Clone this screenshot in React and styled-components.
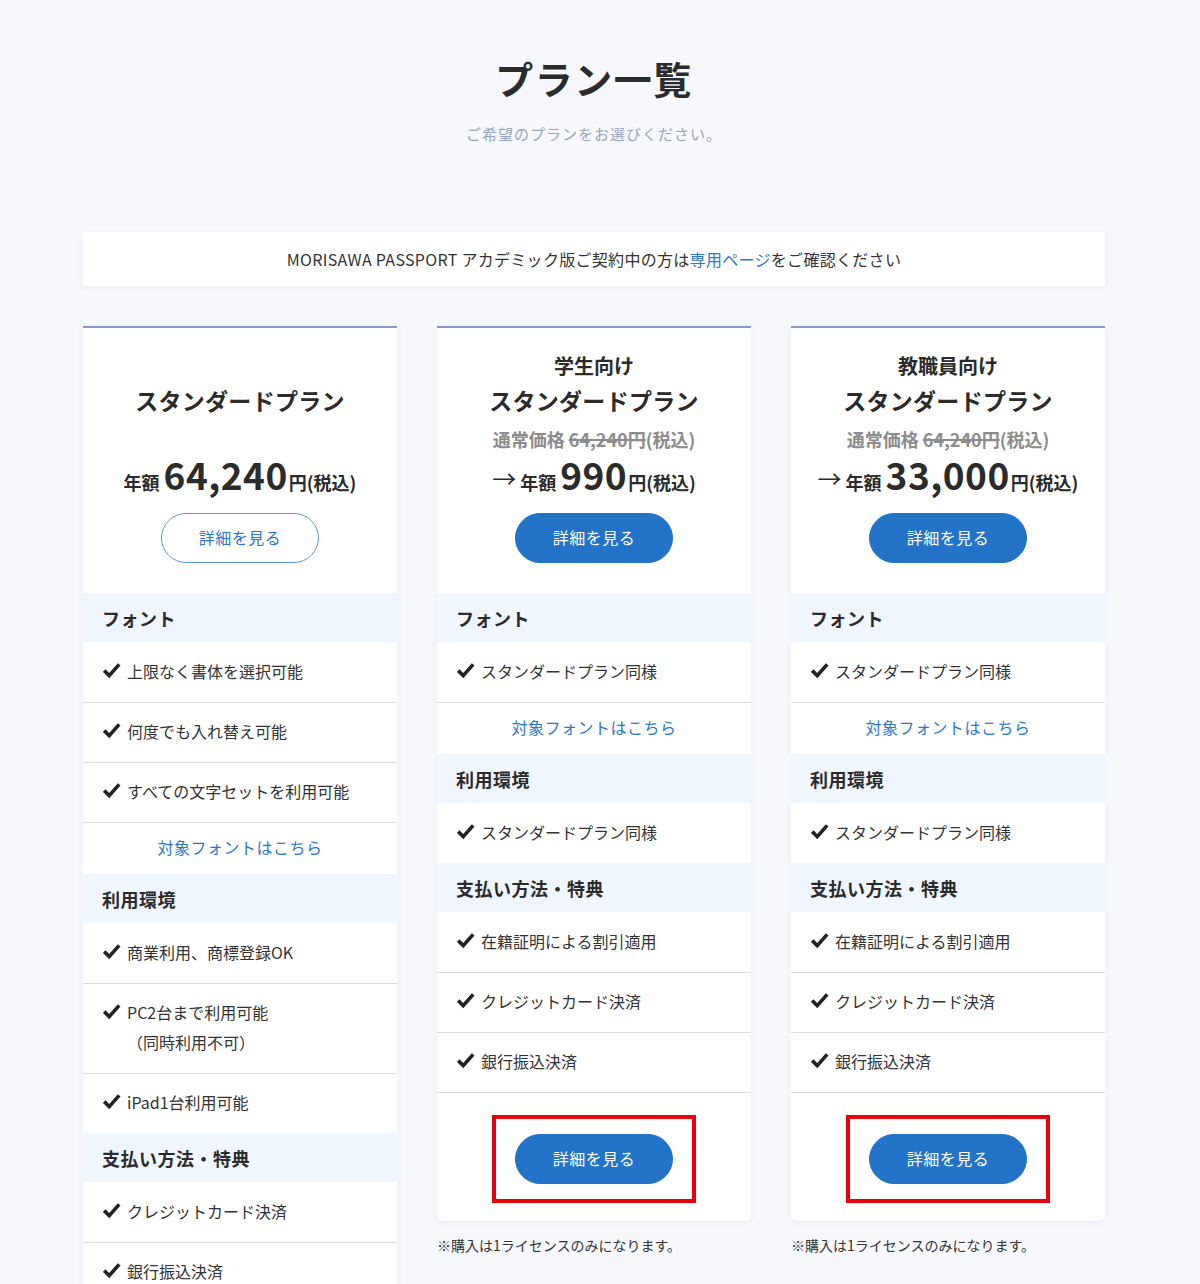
import React from "react";
import styled, { createGlobalStyle } from "styled-components";

const Global = createGlobalStyle`
  html, body { margin: 0; padding: 0; }
  body {
    background: #f7f8fc;
    font-family: "Noto Sans CJK JP", "Noto Sans", sans-serif;
    color: #333;
  }
  * { box-sizing: border-box; }
`;

const Page = styled.div`
  width: 1022px;
  margin-left: 83px;
  padding-top: 51px;
  padding-bottom: 60px;
`;

const Heading = styled.header`
  display: flex;
  flex-direction: column;
  align-items: center;
`;

const Title = styled.h1`
  margin: 0;
  font-size: 38px;
  line-height: 54px;
  font-weight: 700;
  color: #2b2b2b;
  letter-spacing: 1.5px;
`;

const Lead = styled.p`
  margin: 17px 0 0;
  font-size: 15px;
  line-height: 24px;
  color: #97a5bf;
  letter-spacing: 1px;
`;

const Notice = styled.div`
  margin-top: 86px;
  height: 54px;
  background: #fff;
  box-shadow: 0 2px 6px rgba(30, 50, 90, 0.06);
  display: flex;
  align-items: center;
  justify-content: center;
  font-size: 16px;
  letter-spacing: 0.3px;
  color: #333;
`;

const Link = styled.a`
  color: #2f77cc;
  text-decoration: none;
`;

const Cards = styled.div`
  margin-top: 40px;
  display: grid;
  grid-template-columns: repeat(3, 314px);
  column-gap: 40px;
  align-items: start;
`;

const Column = styled.div`
  display: flex;
  flex-direction: column;
`;

const Card = styled.section`
  background: #fff;
  border-top: 2px solid #8299c9;
  border-radius: 0 0 6px 6px;
  box-shadow: 0 2px 8px rgba(30, 50, 90, 0.05);
  overflow: hidden;
`;

const Top = styled.div`
  padding: 21px 0 30px;
  display: flex;
  flex-direction: column;
  align-items: center;
`;

const Target = styled.div`
  font-size: 20px;
  line-height: 34px;
  font-weight: 700;
  color: #2b2b2b;
  min-height: 34px;
`;

const PlanName = styled.h2`
  margin: 0;
  font-size: 23px;
  line-height: 34px;
  font-weight: 700;
  color: #2b2b2b;
  letter-spacing: 0.3px;
`;

const Regular = styled.div`
  font-size: 18px;
  line-height: 40px;
  height: 42px;
  padding-top: 2px;
  font-weight: 700;
  color: #8c8c8c;
  s { text-decoration-thickness: 1.5px; }
`;

const Price = styled.div`
  display: flex;
  align-items: baseline;
  height: 34px;
  line-height: 30px;
  font-weight: 700;
  color: #2b2b2b;
`;

const Arrow = styled.span`
  font-size: 24px;
  font-weight: 400;
  margin-right: 4px;
  position: relative;
  top: -2px;
`;

const Small = styled.span`
  font-size: 18px;
`;

const Amount = styled.span`
  font-size: 37px;
  margin: 0 1px 0 4px;
  letter-spacing: 0.5px;
`;

const Button = styled.a`
  display: flex;
  align-items: center;
  justify-content: center;
  width: 158px;
  height: 50px;
  border-radius: 25px;
  font-size: 16px;
  letter-spacing: 0.5px;
  padding-bottom: 2px;
  text-decoration: none;
  margin-top: ${(p) => (p.$spaced ? "20px" : "0")};
  background: ${(p) => (p.$outline ? "#fff" : "#2373c9")};
  color: ${(p) => (p.$outline ? "#2f77cc" : "#fff")};
  border: 1px solid ${(p) => (p.$outline ? "#5a95d6" : "#2373c9")};
`;

const SectionHead = styled.h3`
  margin: 0;
  height: 49px;
  display: flex;
  align-items: center;
  padding-left: 19px;
  background: #eff6fe;
  font-size: 18px;
  font-weight: 700;
  color: #2b2b2b;
  letter-spacing: 0.5px;
`;

const Item = styled.div`
  display: flex;
  align-items: flex-start;
  gap: 6px;
  padding: ${(p) => (p.$first ? "14px 20px 16px" : "13px 20px 16px")};
  border-top: ${(p) => (p.$first ? "none" : "1px solid #dedede")};
  font-size: 16px;
  line-height: 30px;
  color: #333;
`;

const Check = styled.svg`
  flex: none;
  width: 18px;
  height: 30px;
`;

const ItemText = styled.div`
  white-space: pre-line;
`;

const LinkRow = styled.div`
  border-top: 1px solid #dedede;
  padding: 9px 0 12px;
  text-align: center;
  font-size: 16px;
  line-height: 30px;
  letter-spacing: 0.5px;
`;

const Footer = styled.div`
  border-top: 1px solid #dedede;
  padding: 22px 0 18px;
  display: flex;
  justify-content: center;
`;

const Highlight = styled.div`
  border: 4px solid #e8000b;
  padding: 15px 19px;
  display: flex;
`;

const Note = styled.p`
  margin: 12px 0 0;
  font-size: 14px;
  line-height: 24px;
  color: #333;
`;

const CheckIcon = () => (
  <Check viewBox="0 0 18 30" aria-hidden="true">
    <path d="M1.2 14.6 L6.2 19.6 L16.2 8.4" fill="none" stroke="#222" strokeWidth="3.6" strokeLinejoin="miter" />
  </Check>
);

const plans = [
  {
    target: "",
    regular: false,
    arrow: false,
    amount: "64,240",
    outline: true,
    sections: [
      {
        head: "フォント",
        items: ["上限なく書体を選択可能", "何度でも入れ替え可能", "すべての文字セットを利用可能"],
        link: true,
      },
      {
        head: "利用環境",
        items: ["商業利用、商標登録OK", "PC2台まで利用可能\n（同時利用不可）", "iPad1台利用可能"],
      },
      {
        head: "支払い方法・特典",
        items: ["クレジットカード決済", "銀行振込決済"],
      },
    ],
    footer: false,
  },
  {
    target: "学生向け",
    regular: true,
    arrow: true,
    amount: "990",
    outline: false,
    sections: [
      { head: "フォント", items: ["スタンダードプラン同様"], link: true },
      { head: "利用環境", items: ["スタンダードプラン同様"] },
      { head: "支払い方法・特典", items: ["在籍証明による割引適用", "クレジットカード決済", "銀行振込決済"] },
    ],
    footer: true,
  },
  {
    target: "教職員向け",
    regular: true,
    arrow: true,
    amount: "33,000",
    outline: false,
    sections: [
      { head: "フォント", items: ["スタンダードプラン同様"], link: true },
      { head: "利用環境", items: ["スタンダードプラン同様"] },
      { head: "支払い方法・特典", items: ["在籍証明による割引適用", "クレジットカード決済", "銀行振込決済"] },
    ],
    footer: true,
  },
];

const PlanCard = ({ plan }) => (
  <Column>
    <Card>
      <Top>
        <Target>{plan.target}</Target>
        <PlanName>スタンダードプラン</PlanName>
        <Regular>
          {plan.regular && (
            <>
              通常価格 <s>64,240円</s>(税込)
            </>
          )}
        </Regular>
        <Price>
          {plan.arrow && <Arrow>→</Arrow>}
          <Small>年額</Small>
          <Amount>{plan.amount}</Amount>
          <Small>円(税込)</Small>
        </Price>
        <Button href="#" $spaced $outline={plan.outline}>
          詳細を見る
        </Button>
      </Top>
      {plan.sections.map((s) => (
        <div key={s.head}>
          <SectionHead>{s.head}</SectionHead>
          {s.items.map((it, i) => (
            <Item key={it} $first={i === 0}>
              <CheckIcon />
              <ItemText>{it}</ItemText>
            </Item>
          ))}
          {s.link && (
            <LinkRow>
              <Link href="#">対象フォントはこちら</Link>
            </LinkRow>
          )}
        </div>
      ))}
      {plan.footer && (
        <Footer>
          <Highlight>
            <Button href="#">詳細を見る</Button>
          </Highlight>
        </Footer>
      )}
    </Card>
    {plan.footer && <Note>※購入は1ライセンスのみになります。</Note>}
  </Column>
);

export default function App() {
  return (
    <>
      <Global />
      <Page>
        <Heading>
          <Title>プラン一覧</Title>
          <Lead>ご希望のプランをお選びください。</Lead>
        </Heading>
        <Notice>
          MORISAWA PASSPORT アカデミック版ご契約中の方は<Link href="#">専用ページ</Link>をご確認ください
        </Notice>
        <Cards>
          {plans.map((p) => (
            <PlanCard key={p.amount} plan={p} />
          ))}
        </Cards>
      </Page>
    </>
  );
}
